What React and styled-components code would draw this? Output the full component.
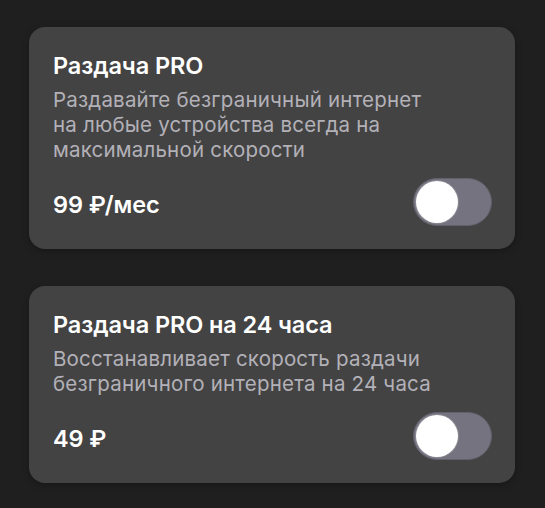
import styled, { createGlobalStyle } from "styled-components";
import { useState } from "react";

const GlobalStyle = createGlobalStyle`
  html, body {
    margin: 0;
    padding: 0;
    background: #1f1f1f;
  }
  body {
    font-family: Inter, "Noto Sans", sans-serif;
    -webkit-font-smoothing: antialiased;
  }
`;

const Page = styled.div`
  width: 545px;
  min-height: 508px;
  box-sizing: border-box;
  padding: 27px 30px 0 29px;
  display: flex;
  flex-direction: column;
  gap: 37px;
`;

const Card = styled.div`
  background: #434343;
  border-radius: 16px;
  padding: 24px 23px 23px 24px;
  box-shadow: 0 2px 6px rgba(0, 0, 0, 0.25);
  display: flex;
  flex-direction: column;
`;

const Title = styled.div`
  font-size: 23.5px;
  font-weight: 600;
  line-height: 30px;
  color: #ffffff;
  letter-spacing: -0.1px;
`;

const Desc = styled.div`
  margin-top: 6px;
  font-size: 20.5px;
  line-height: 25px;
  letter-spacing: 0.2px;
  color: #b3b1b8;
  max-width: 393px;
`;

const Row = styled.div`
  margin-top: 16px;
  display: flex;
  align-items: center;
  justify-content: space-between;
`;

const Price = styled.div`
  font-size: 23.5px;
  font-weight: 600;
  color: #ffffff;
  letter-spacing: -0.1px;
  margin-top: 4px;
`;

const Track = styled.button`
  width: 79px;
  height: 48px;
  border-radius: 24px;
  border: 1.5px solid #62616b;
  background: ${(props) => (props.on ? "#6fbf73" : "#75737f")};
  padding: 0;
  position: relative;
  cursor: pointer;
  box-sizing: border-box;
`;

const Knob = styled.span`
  position: absolute;
  top: 1.5px;
  left: ${(props) => (props.on ? "33px" : "1.5px")};
  width: 42px;
  height: 42px;
  border-radius: 50%;
  background: #ffffff;
  box-shadow: 0 0 0 1px #8a8992;
  transition: left 0.2s;
`;

const Toggle = () => {
  const [on, setOn] = useState(false);
  return (
    <Track on={on ? 1 : 0} onClick={() => setOn(!on)}>
      <Knob on={on ? 1 : 0} />
    </Track>
  );
};

const offers = [
  {
    id: 1,
    title: "Раздача PRO",
    desc: "Раздавайте безграничный интернет на любые устройства всегда на максимальной скорости",
    price: "99 ₽/мес",
  },
  {
    id: 2,
    title: "Раздача PRO на 24 часа",
    desc: "Восстанавливает скорость раздачи безграничного интернета на 24 часа",
    price: "49 ₽",
  },
];

export default function App() {
  return (
    <>
      <GlobalStyle />
      <Page>
        {offers.map((o) => (
          <Card key={o.id}>
            <Title>{o.title}</Title>
            <Desc>{o.desc}</Desc>
            <Row>
              <Price>{o.price}</Price>
              <Toggle />
            </Row>
          </Card>
        ))}
      </Page>
    </>
  );
}
